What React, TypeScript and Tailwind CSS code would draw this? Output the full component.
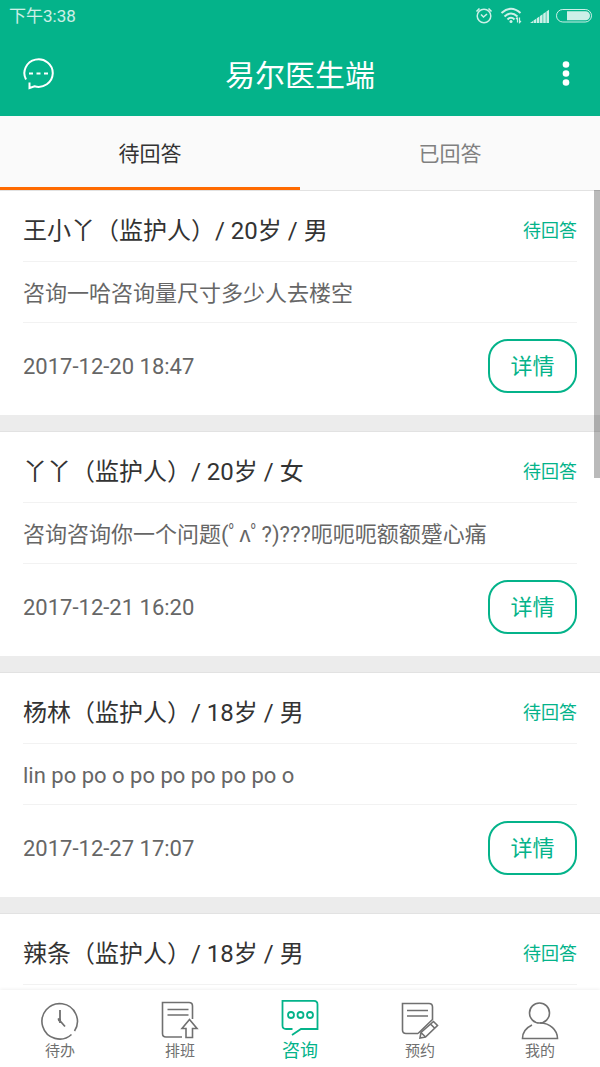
import type { ReactNode } from 'react'

interface Consultation {
  patient: string
  status: string
  message?: string
  date?: string
}

interface NavItem {
  label: string
  icon: ReactNode
  active?: boolean
}

const consultations: Consultation[] = [
  {
    patient: '王小丫（监护人）/ 20岁 / 男',
    status: '待回答',
    message: '咨询一哈咨询量尺寸多少人去楼空',
    date: '2017-12-20 18:47',
  },
  {
    patient: '丫丫（监护人）/ 20岁 / 女',
    status: '待回答',
    message: '咨询咨询你一个问题(ﾟʌﾟ?)???呃呃呃额额蹙心痛',
    date: '2017-12-21 16:20',
  },
  {
    patient: '杨林（监护人）/ 18岁 / 男',
    status: '待回答',
    message: 'lin po po o po po po po po o',
    date: '2017-12-27 17:07',
  },
  {
    patient: '辣条（监护人）/ 18岁 / 男',
    status: '待回答',
  },
]

const navItems: NavItem[] = [
  { label: '待办', icon: <ClockIcon /> },
  { label: '排班', icon: <ScheduleIcon /> },
  { label: '咨询', icon: <ConsultIcon />, active: true },
  { label: '预约', icon: <BookingIcon /> },
  { label: '我的', icon: <PersonIcon /> },
]

function ClockIcon() {
  return (
    <svg width="40" height="40" viewBox="0 0 40 40" fill="none" stroke="currentColor" strokeWidth="1.6">
      <path d="M31.5 34.5A17.7 17.7 0 1 1 34.5 31" />
      <path d="M20 10V23M18 18.5L25 26.5" strokeWidth="1.8" />
      <circle cx="19.5" cy="20" r="1.6" fill="currentColor" stroke="none" />
    </svg>
  )
}

function ScheduleIcon() {
  return (
    <svg width="40" height="40" viewBox="0 0 40 40" fill="none" stroke="currentColor" strokeWidth="1.6">
      <path d="M32.5 19V6Q32.5 2.5 29 2.5H2.5V33.5Q2.5 37 6 37H22" />
      <path d="M7.5 9.5H28.5M7.5 15H28.5" />
      <path d="M26 37.5V28.5H22L29.5 19.5L37 28.5H32.5V37.5Z" />
    </svg>
  )
}

function ConsultIcon() {
  return (
    <svg width="40" height="40" viewBox="0 0 40 40" fill="none" stroke="currentColor" strokeWidth="1.8">
      <path d="M12.5 29H6Q2.5 29 2.5 25.5V0.9H34Q37.5 0.9 37.5 4.5V29H21L12 35" />
      <circle cx="11" cy="15" r="3" />
      <circle cx="20.5" cy="15" r="3" />
      <circle cx="30" cy="15" r="3" />
    </svg>
  )
}

function BookingIcon() {
  return (
    <svg width="40" height="40" viewBox="0 0 40 40" fill="none" stroke="currentColor" strokeWidth="1.6">
      <path d="M18 33.5H6Q2.5 33.5 2.5 30V3.5H29Q32.5 3.5 32.5 7V19.5L18 33.5" />
      <path d="M7 10.5H28M7 16H28" />
      <path d="M20 38L21 32.5L33.5 21.5L37.5 25.5L25.5 37ZM21 32.5L25.5 37M30.5 24L34.5 28" />
    </svg>
  )
}

function PersonIcon() {
  return (
    <svg width="40" height="40" viewBox="0 0 40 40" fill="none" stroke="currentColor" strokeWidth="1.6">
      <circle cx="19.5" cy="13" r="10" />
      <path d="M12 25Q2.5 29.5 2.5 38.5H37.5C37.5 30 30 23 20 23" />
    </svg>
  )
}

function MessageIcon() {
  return (
    <svg width="32" height="32" viewBox="0 0 32 32" fill="none" stroke="currentColor" strokeWidth="2">
      <path d="M4 21.5A14.2 13.8 0 1 1 12.5 28.3L7.5 30V24.5" />
      <path d="M7 15.5H11M14.5 15.5H18.5M22 15.5H26" />
    </svg>
  )
}

function StatusIcons() {
  return (
    <svg width="118" height="18" viewBox="0 0 118 18" fill="none" stroke="currentColor" aria-hidden="true">
      <circle cx="9" cy="9" r="6.8" strokeWidth="1.5" />
      <path d="M6 7.5L8.5 10L12 7" strokeWidth="1.6" />
      <path d="M1.5 4.5L4.5 1.5M16.5 4.5L13.5 1.5" strokeWidth="1.6" />
      <path d="M26.5 6Q36 -2.5 45.5 6M29.5 9.5Q36 3.5 42.5 9.5M32.5 12.5Q36 9 39.5 12.5" strokeWidth="2" />
      <circle cx="36" cy="14.5" r="1.5" fill="currentColor" stroke="none" />
      <path d="M42.5 15.5V10.5M41 12L42.5 10.5M44.5 10.5V15.5L46 14" strokeWidth="1.2" />
      <path
        d="M55 16L58 14V16ZM58.5 13.5L61.2 11.7V16H58.5ZM61.8 11.2L64.4 9.5V16H61.8ZM65 9L67.6 7.2V16H65ZM68.2 6.8L70.8 5V16H68.2ZM71.4 4.6L74 2.8V16H71.4Z"
        fill="currentColor"
        stroke="none"
      />
      <rect x="81.5" y="2.5" width="35" height="12.5" rx="6.25" />
      <path d="M92 4.3H110.5A4.5 4.5 0 0 1 110.5 13.3H92Z" fill="currentColor" stroke="none" />
    </svg>
  )
}

function ConsultationCard({ patient, status, message, date }: Consultation) {
  return (
    <article className="border-b-16 border-[#ececec] bg-white last:border-b-0">
      <div className="border-t border-[#e2e2e2] px-[23px]">
        <div className="flex h-[71px] items-center justify-between border-b border-[#f2f2f2] pt-2.5">
          <h2 className="text-2xl text-[#333]">{patient}</h2>
          <span className="text-lg text-[#04b38a]">{status}</span>
        </div>
        {message && (
          <p className="flex h-[61px] items-center border-b border-[#f2f2f2] pt-0.5 text-[22px] text-[#666]">
            {message}
          </p>
        )}
        {date && (
          <div className="flex h-[92px] items-center justify-between pb-1.5">
            <time className="text-[22px] text-[#666]">{date}</time>
            <button
              type="button"
              className="h-[54px] w-[89px] rounded-[20px] border-2 border-[#04b38a] text-[22px] text-[#04b38a]"
            >
              详情
            </button>
          </div>
        )}
      </div>
    </article>
  )
}

export default function App() {
  return (
    <div className="flex h-screen flex-col bg-white font-[Roboto,'Noto_Sans_CJK_SC',sans-serif]">
      <header className="bg-[#04b38a] text-white">
        <div className="flex h-8 items-center justify-between pr-[7px] pl-[9px] text-white/80">
          <span className="pt-0.5 text-[17px]">下午3:38</span>
          <StatusIcons />
        </div>
        <div className="flex h-[84px] items-center justify-between px-[22px]">
          <button type="button" aria-label="消息">
            <MessageIcon />
          </button>
          <h1 className="pt-1 text-3xl">易尔医生端</h1>
          <button type="button" aria-label="更多" className="flex w-8 justify-end pr-2">
            <svg width="8" height="26" viewBox="0 0 8 26" fill="currentColor">
              <circle cx="4" cy="3.5" r="3.3" />
              <circle cx="4" cy="12.5" r="3.3" />
              <circle cx="4" cy="21.5" r="3.3" />
            </svg>
          </button>
        </div>
      </header>

      <div className="flex h-[74px] shrink-0 bg-[#fafafa] text-[21px]">
        <button type="button" className="flex-1 border-b-3 border-[#ff6a00] pt-1.5 text-[#333]">
          待回答
        </button>
        <button type="button" className="flex-1 border-b-3 border-transparent pt-1.5 text-[#808080]">
          已回答
        </button>
      </div>

      <div className="relative min-h-0 flex-1">
        <main className="h-full overflow-y-auto [scrollbar-width:none]">
          {consultations.map((item) => (
            <ConsultationCard key={item.patient} {...item} />
          ))}
        </main>
        <div className="absolute top-0 right-0 h-[36%] w-1.5 bg-black/27" />
      </div>

      <nav className="relative flex h-[77px] shrink-0 bg-white shadow-[0_-1px_3px_rgba(0,0,0,0.06)]">
        {navItems.map(({ label, icon, active }) => (
          <a
            key={label}
            href="#"
            className={
              active
                ? 'flex flex-1 flex-col items-center pt-2.5 text-lg/[22px] text-[#04b38a]'
                : 'flex flex-1 flex-col items-center pt-2.5 text-[15px]/[22px] text-[#707070]'
            }
          >
            {icon}
            {label}
          </a>
        ))}
      </nav>
    </div>
  )
}
